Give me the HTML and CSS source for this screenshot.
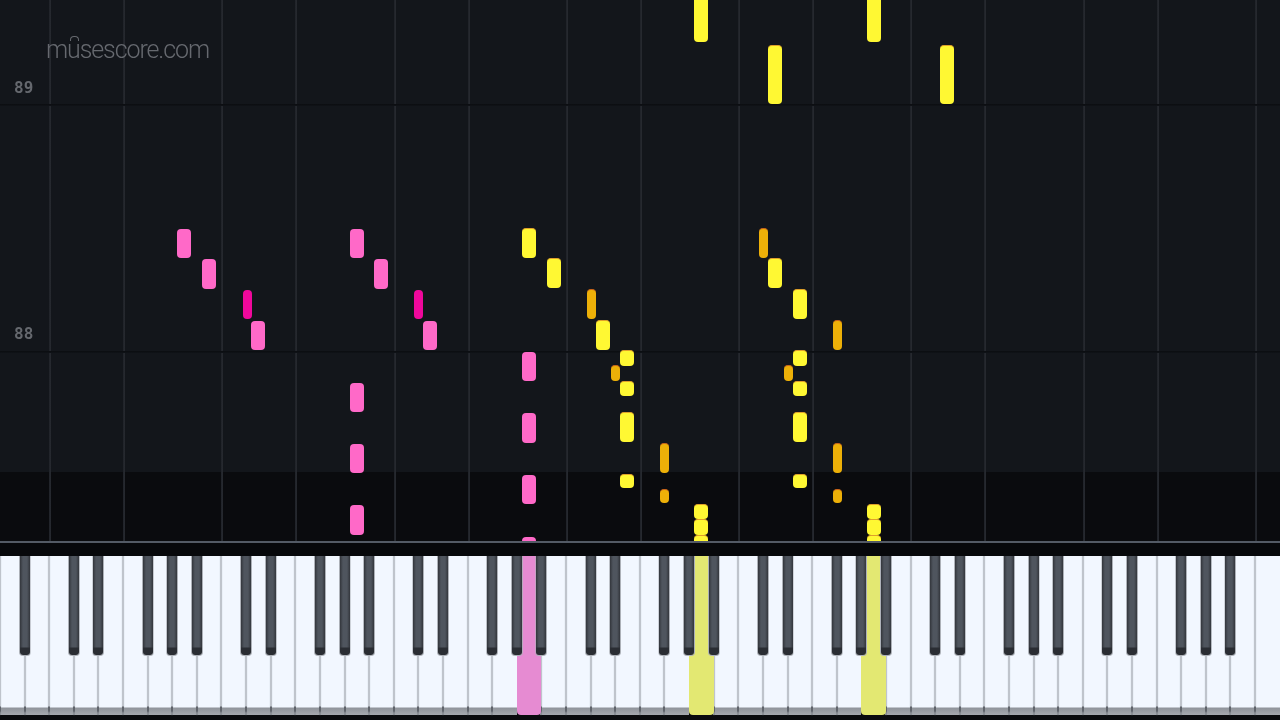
FILE: index.html
```html
<!DOCTYPE html>
<html lang="en">
<head>
<meta charset="utf-8">
<title>Piano roll</title>
<link rel="stylesheet" href="styles.css">
</head>
<body>
<main class="stage">
  <section class="roll">
    <div class="upper"></div>
    <div class="lower"></div>
    <div class="rail"></div>
    <div class="gap"></div>

    <i class="vline" style="left:49px"></i><i class="vline" style="left:123px"></i><i class="vline" style="left:221px"></i><i class="vline" style="left:295px"></i><i class="vline" style="left:394px"></i><i class="vline" style="left:468px"></i><i class="vline" style="left:566px"></i><i class="vline" style="left:640px"></i><i class="vline" style="left:738px"></i><i class="vline" style="left:812px"></i><i class="vline" style="left:910px"></i><i class="vline" style="left:984px"></i><i class="vline" style="left:1083px"></i><i class="vline" style="left:1157px"></i><i class="vline" style="left:1255px"></i>
    <i class="hline" style="top:104px"></i><i class="hline" style="top:351px"></i>

    <div class="logo">m<span class="dome">u</span>sescore.com</div>
    <div class="measure" style="top:79px">89</div>
    <div class="measure" style="top:325px">88</div>

    <!-- left hand -->
    <i class="note wide pink" style="left:177px;top:229px;height:29px"></i>
    <i class="note wide pink" style="left:202px;top:259px;height:30px"></i>
    <i class="note thin magenta" style="left:243px;top:290px;height:29px"></i>
    <i class="note wide pink" style="left:251px;top:321px;height:29px"></i>
    <i class="note wide pink" style="left:350px;top:229px;height:29px"></i>
    <i class="note wide pink" style="left:374px;top:259px;height:30px"></i>
    <i class="note thin magenta" style="left:414px;top:290px;height:29px"></i>
    <i class="note wide pink" style="left:423px;top:321px;height:29px"></i>
    <i class="note wide pink" style="left:350px;top:383px;height:29px"></i>
    <i class="note wide pink" style="left:350px;top:444px;height:29px"></i>
    <i class="note wide pink" style="left:350px;top:505px;height:30px"></i>
    <i class="note wide pink" style="left:522px;top:352px;height:29px"></i>
    <i class="note wide pink" style="left:522px;top:413px;height:30px"></i>
    <i class="note wide pink" style="left:522px;top:475px;height:29px"></i>
    <i class="note wide pink cut" style="left:522px;top:537px;height:5px"></i>

    <!-- right hand -->
    <i class="note wide yellow flat" style="left:694px;top:0;height:42px"></i>
    <i class="note wide yellow" style="left:768px;top:45px;height:59px"></i>
    <i class="note wide yellow flat" style="left:867px;top:0;height:42px"></i>
    <i class="note wide yellow" style="left:940px;top:45px;height:59px"></i>

    <i class="note wide yellow" style="left:522px;top:228px;height:30px"></i>
    <i class="note wide yellow" style="left:547px;top:258px;height:30px"></i>
    <i class="note thin amber" style="left:587px;top:289px;height:30px"></i>
    <i class="note wide yellow" style="left:596px;top:320px;height:30px"></i>
    <i class="note wide yellow" style="left:620px;top:350px;height:16px"></i>
    <i class="note thin amber" style="left:611px;top:365px;height:16px"></i>
    <i class="note wide yellow" style="left:620px;top:381px;height:15px"></i>
    <i class="note wide yellow" style="left:620px;top:412px;height:30px"></i>
    <i class="note wide yellow" style="left:620px;top:474px;height:14px"></i>
    <i class="note thin amber" style="left:660px;top:443px;height:30px"></i>
    <i class="note thin amber" style="left:660px;top:489px;height:14px"></i>
    <i class="note wide yellow" style="left:694px;top:504px;height:15px"></i>
    <i class="note wide yellow" style="left:694px;top:519px;height:16px"></i>
    <i class="note wide yellow cut" style="left:694px;top:535px;height:7px"></i>

    <i class="note thin amber" style="left:759px;top:228px;height:30px"></i>
    <i class="note wide yellow" style="left:768px;top:258px;height:30px"></i>
    <i class="note wide yellow" style="left:793px;top:289px;height:30px"></i>
    <i class="note thin amber" style="left:833px;top:320px;height:30px"></i>
    <i class="note wide yellow" style="left:793px;top:350px;height:16px"></i>
    <i class="note thin amber" style="left:784px;top:365px;height:16px"></i>
    <i class="note wide yellow" style="left:793px;top:381px;height:15px"></i>
    <i class="note wide yellow" style="left:793px;top:412px;height:30px"></i>
    <i class="note wide yellow" style="left:793px;top:474px;height:14px"></i>
    <i class="note thin amber" style="left:833px;top:443px;height:30px"></i>
    <i class="note thin amber" style="left:833px;top:489px;height:14px"></i>
    <i class="note wide yellow" style="left:867px;top:504px;height:15px"></i>
    <i class="note wide yellow" style="left:867px;top:519px;height:16px"></i>
    <i class="note wide yellow cut" style="left:867px;top:535px;height:7px"></i>
  </section>

  <section class="keyboard">
    <div class="key"></div><div class="key sharp"></div><div class="key"></div><div class="key sharp"></div><div class="key sharp"></div><div class="key"></div><div class="key sharp"></div>
    <div class="key sharp"></div><div class="key sharp"></div><div class="key"></div><div class="key sharp"></div><div class="key sharp"></div><div class="key"></div><div class="key sharp"></div>
    <div class="key sharp"></div><div class="key sharp"></div><div class="key"></div><div class="key sharp"></div><div class="key sharp"></div><div class="key"></div><div class="key sharp"></div>
    <div class="key sharp on-pink"></div><div class="key sharp"></div><div class="key"></div><div class="key sharp"></div><div class="key sharp"></div><div class="key"></div><div class="key sharp"></div>
    <div class="key sharp on-yellow"></div><div class="key sharp"></div><div class="key"></div><div class="key sharp"></div><div class="key sharp"></div><div class="key"></div><div class="key sharp"></div>
    <div class="key sharp on-yellow"></div><div class="key sharp"></div><div class="key"></div><div class="key sharp"></div><div class="key sharp"></div><div class="key"></div><div class="key sharp"></div>
    <div class="key sharp"></div><div class="key sharp"></div><div class="key"></div><div class="key sharp"></div><div class="key sharp"></div><div class="key"></div><div class="key sharp"></div>
    <div class="key sharp"></div><div class="key sharp"></div><div class="key"></div>
  </section>
</main>
</body>
</html>
```
FILE: styles.css
```css
* { box-sizing: border-box; }

html, body {
  margin: 0;
  height: 100%;
  background: #0a0b0e;
  overflow: hidden;
}

.stage {
  width: 1280px;
  height: 720px;
  display: flex;
  flex-direction: column;
  font-family: "Roboto", "Liberation Sans", sans-serif;
}

/* Piano roll */
.roll {
  position: relative;
  height: 556px;
  display: flex;
  flex-direction: column;
  overflow: hidden;
}

.upper { height: 472px; background: #13161b; }
.lower { height: 69px; background: #0a0b0e; }
.rail { height: 2px; background: #535a65; position: relative; z-index: 3; }
.gap { flex: 1; background: #07080b; position: relative; z-index: 3; }

.vline {
  position: absolute;
  top: 0;
  height: 541px;
  width: 2px;
  background: linear-gradient(90deg, #1f2228, #282b31);
}

.hline {
  position: absolute;
  left: 0;
  right: 0;
  height: 2px;
  background: linear-gradient(#0b0d10, #101318);
}

.logo {
  position: absolute;
  left: 46px;
  top: 35px;
  font-size: 25px;
  font-weight: 300;
  letter-spacing: -1.1px;
  line-height: 30px;
  color: #66696f;
  filter: blur(0.3px);
}

.dome { position: relative; }

.dome::before {
  content: "";
  position: absolute;
  left: 3px;
  top: 1px;
  width: 7px;
  height: 4px;
  border: 1px solid #66696f;
  border-bottom: 0;
  border-radius: 4px 4px 0 0;
}

.measure {
  position: absolute;
  left: 14px;
  font-family: "DejaVu Sans Mono", monospace;
  font-size: 16px;
  font-weight: 700;
  line-height: 18px;
  color: #65686e;
  filter: blur(0.3px);
}

/* Notes */
.note {
  position: absolute;
  border-radius: 4px;
  z-index: 2;
  filter: blur(0.4px);
}

.wide { width: 14px; }
.thin { width: 9px; }

.pink { background: #ff69c8; }
.magenta { background: #f0089c; }
.yellow { background: #fff833; border-top: 1px solid #e0a02a; }
.amber { background: #edb008; border-top: 1px solid #c9631a; }
.flat { border-top: 0; border-radius: 0 0 4px 4px; }
.cut { border-radius: 4px 4px 0 0; }

/* Keyboard */
.keyboard {
  display: flex;
  height: 164px;
  background: #0a0b0e;
}

.key {
  position: relative;
  flex: 1 1 0;
  height: 159px;
  background: linear-gradient(#f2f7ff 0 151px, #90949b 152px, #a6a9af 159px);
}

.key::before {
  content: "";
  position: absolute;
  left: -1px;
  top: 0;
  bottom: 0;
  width: 2px;
  background: linear-gradient(#bfc4cc 0 150px, #5f636b 151px 155px, #8b8f96 157px);
  box-shadow: 0 0 1px rgba(150, 155, 165, 0.7);
  z-index: 1;
}

.sharp::after {
  content: "";
  position: absolute;
  left: -5px;
  top: 0;
  width: 10px;
  height: 99px;
  border-radius: 0 0 3px 3px;
  background:
    linear-gradient(rgba(0, 0, 0, 0) 0 91px, #2a2d33 92px),
    linear-gradient(90deg, #33363c, #4f555e 30% 70%, #33363c);
  box-shadow: 0 0 0 1px #adb1b8;
  clip-path: inset(0 -1px -1px -1px);
  z-index: 3;
}

.on-pink, .on-yellow {
  border-radius: 0 0 4px 4px;
  z-index: 2;
}

.on-pink::before, .on-yellow::before { display: none; }

.on-pink { background: #e68bd2; }
.on-yellow { background: #e3e872; }
```
